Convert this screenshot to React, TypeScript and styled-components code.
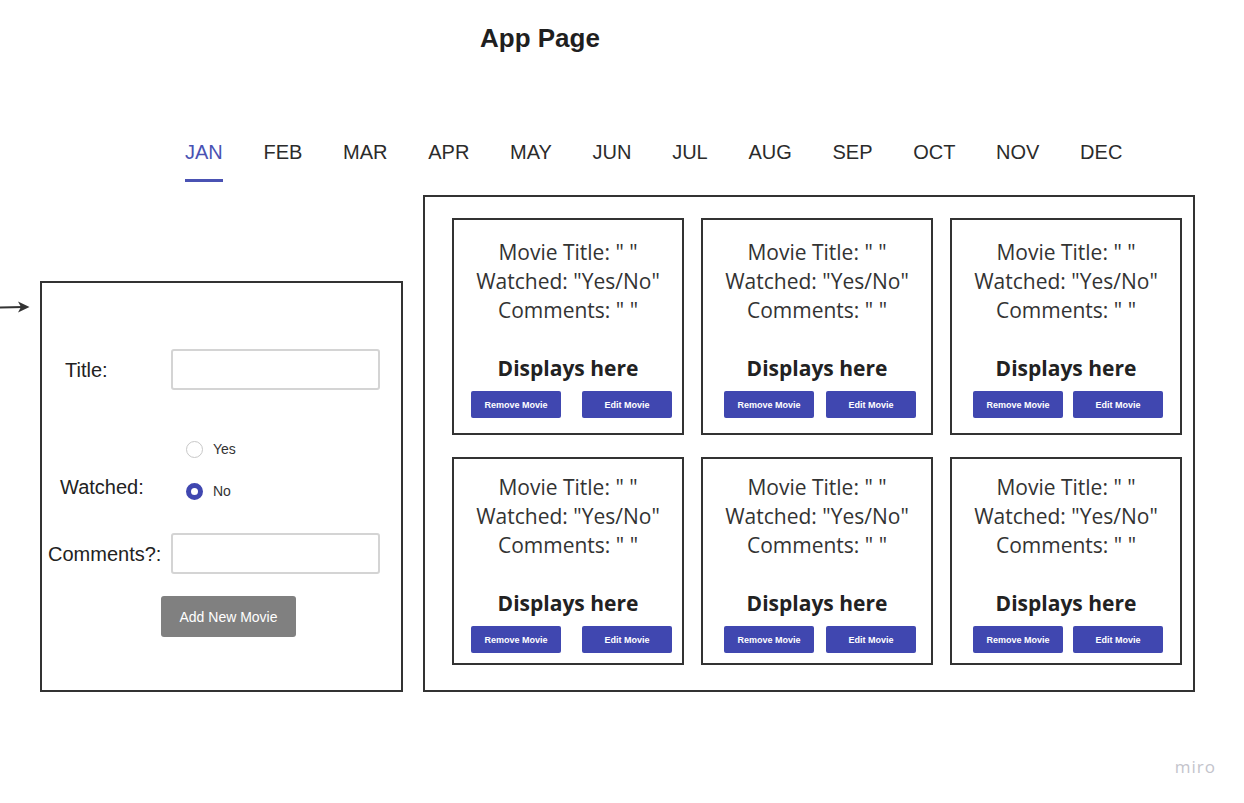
import React from 'react';
import styled, { createGlobalStyle } from 'styled-components';

const GlobalStyle = createGlobalStyle`
  html, body {
    margin: 0;
    padding: 0;
    background: #ffffff;
  }
  body {
    font-family: 'Liberation Sans', Arial, sans-serif;
    color: #222222;
  }
`;

const MONTHS = ['JAN', 'FEB', 'MAR', 'APR', 'MAY', 'JUN', 'JUL', 'AUG', 'SEP', 'OCT', 'NOV', 'DEC'];

// per column: left offset of the button pair and the gap between the buttons
const BUTTON_LAYOUT = [
  { left: 17, gap: 21 },
  { left: 21, gap: 12 },
  { left: 21, gap: 10 },
];

const StyledPage = styled.div`
  position: relative;
  width: 1244px;
  height: 803px;
  overflow: hidden;
`;

const StyledHeading = styled.h1`
  margin: 23px 0 0 0;
  padding-left: 480px;
  font-size: 26px;
  line-height: 30px;
  font-weight: 700;
  color: #1f1f1f;
`;

const StyledTabs = styled.div`
  display: flex;
  gap: 40.7px;
  margin-top: 87px;
  padding-left: 185px;
`;

const StyledTab = styled.div<{ active: boolean }>`
  font-size: 20px;
  line-height: 24px;
  padding-bottom: 15px;
  color: ${({ active }) => (active ? '#4a52b3' : '#2b2b2b')};
  border-bottom: 3px solid ${({ active }) => (active ? '#4a52b3' : 'transparent')};
`;

const StyledContent = styled.div`
  display: flex;
  align-items: flex-end;
  margin-top: 13px;
`;

const StyledArrow = styled.svg`
  align-self: flex-start;
  margin-top: 105px;
  margin-right: 10px;
  flex-shrink: 0;
`;

const StyledForm = styled.div`
  box-sizing: border-box;
  width: 363px;
  height: 411px;
  border: 2px solid #333333;
  padding-top: 66px;
  display: flex;
  flex-direction: column;
`;

const StyledFieldRow = styled.div<{ top?: number }>`
  display: grid;
  grid-template-columns: 129px 209px;
  align-items: center;
  margin-top: ${({ top }) => top ?? 0}px;
`;

const StyledLabel = styled.div<{ indent: number }>`
  font-size: 20px;
  line-height: 24px;
  color: #222222;
  padding-left: ${({ indent }) => indent}px;
  white-space: nowrap;
`;

const StyledWatchedLabel = styled(StyledLabel)`
  align-self: end;
`;

const StyledInput = styled.div`
  box-sizing: border-box;
  height: 41px;
  width: 209px;
  border: 2px solid #d4d4d4;
  border-radius: 3px;
  background: #ffffff;
`;

const StyledRadioGroup = styled.div`
  display: flex;
  flex-direction: column;
  gap: 26px;
  padding-left: 15px;
`;

const StyledOption = styled.div`
  display: flex;
  align-items: center;
  gap: 10px;
  height: 16px;
  font-size: 14px;
  color: #333333;
`;

const StyledRadio = styled.span<{ checked: boolean }>`
  box-sizing: border-box;
  width: 17px;
  height: 17px;
  border-radius: 50%;
  border: ${({ checked }) => (checked ? '5px solid #4047b0' : '1.5px solid #c8c8c8')};
  background: #ffffff;
`;

const StyledAddButton = styled.div`
  box-sizing: border-box;
  width: 135px;
  height: 41px;
  margin: 22px 0 0 119px;
  background: #808080;
  border-radius: 3px;
  color: #ffffff;
  font-size: 14px;
  display: flex;
  align-items: center;
  justify-content: center;
`;

const StyledBoard = styled.div`
  box-sizing: border-box;
  width: 772px;
  margin-left: 20px;
  border: 2px solid #333333;
  padding: 21px 11px 25px 27px;
  display: grid;
  grid-template-columns: repeat(3, 232px);
  grid-template-rows: 217px 208px;
  column-gap: 17px;
  row-gap: 22px;
`;

const StyledCard = styled.div<{ top: number }>`
  box-sizing: border-box;
  border: 2px solid #333333;
  padding-top: ${({ top }) => top}px;
  display: flex;
  flex-direction: column;
  font-family: 'Open Sans', 'Noto Sans', sans-serif;
`;

const StyledCardLines = styled.div`
  text-align: center;
  font-size: 21px;
  line-height: 29px;
  color: #333333;
`;

const StyledCardNote = styled.div`
  margin-top: 29px;
  text-align: center;
  font-size: 21px;
  line-height: 29px;
  font-weight: 700;
  color: #222222;
`;

const StyledButtonRow = styled.div<{ left: number; gap: number }>`
  display: flex;
  margin-top: 8px;
  padding-left: ${({ left }) => left}px;
  gap: ${({ gap }) => gap}px;
`;

const StyledCardButton = styled.div`
  width: 90px;
  height: 27px;
  background: #4047b0;
  border-radius: 2px;
  color: #ffffff;
  font-family: 'Liberation Sans', Arial, sans-serif;
  font-size: 9px;
  font-weight: 700;
  display: flex;
  align-items: center;
  justify-content: center;
`;

const StyledWatermark = styled.div`
  position: absolute;
  right: 28px;
  bottom: 25px;
  font-family: 'Open Sans', sans-serif;
  font-size: 17px;
  letter-spacing: 1px;
  color: #c4c4cc;
`;

const MovieCard: React.FC<{ column: number; row: number }> = ({ column, row }) => {
  const layout = BUTTON_LAYOUT[column];
  return (
    <StyledCard top={row === 0 ? 18 : 14}>
      <StyledCardLines>
        <div>Movie Title: " "</div>
        <div>Watched: "Yes/No"</div>
        <div>Comments: " "</div>
      </StyledCardLines>
      <StyledCardNote>Displays here</StyledCardNote>
      <StyledButtonRow left={layout.left} gap={layout.gap}>
        <StyledCardButton>Remove Movie</StyledCardButton>
        <StyledCardButton>Edit Movie</StyledCardButton>
      </StyledButtonRow>
    </StyledCard>
  );
};

const App: React.FC = () => {
  return (
    <StyledPage>
      <GlobalStyle />
      <StyledHeading>App Page</StyledHeading>
      <StyledTabs>
        {MONTHS.map((month) => (
          <StyledTab key={month} active={month === 'JAN'}>
            {month}
          </StyledTab>
        ))}
      </StyledTabs>
      <StyledContent>
        <StyledArrow width="30" height="14" viewBox="0 0 30 14">
          <line x1="0" y1="7.6" x2="24" y2="7" stroke="#333" strokeWidth="2" />
          <path d="M18 1.5 L29.5 7 L18 12.5 L21 7 Z" fill="#333" />
        </StyledArrow>
        <StyledForm>
          <StyledFieldRow>
            <StyledLabel indent={23}>Title:</StyledLabel>
            <StyledInput />
          </StyledFieldRow>
          <StyledFieldRow top={51}>
            <StyledWatchedLabel indent={18}>Watched:</StyledWatchedLabel>
            <StyledRadioGroup>
              <StyledOption>
                <StyledRadio checked={false} />
                Yes
              </StyledOption>
              <StyledOption>
                <StyledRadio checked />
                No
              </StyledOption>
            </StyledRadioGroup>
          </StyledFieldRow>
          <StyledFieldRow top={34}>
            <StyledLabel indent={6}>Comments?:</StyledLabel>
            <StyledInput />
          </StyledFieldRow>
          <StyledAddButton>Add New Movie</StyledAddButton>
        </StyledForm>
        <StyledBoard>
          {[0, 1].map((row) =>
            [0, 1, 2].map((column) => (
              <MovieCard key={`${row}-${column}`} row={row} column={column} />
            )),
          )}
        </StyledBoard>
      </StyledContent>
      <StyledWatermark>miro</StyledWatermark>
    </StyledPage>
  );
};

export default App;
